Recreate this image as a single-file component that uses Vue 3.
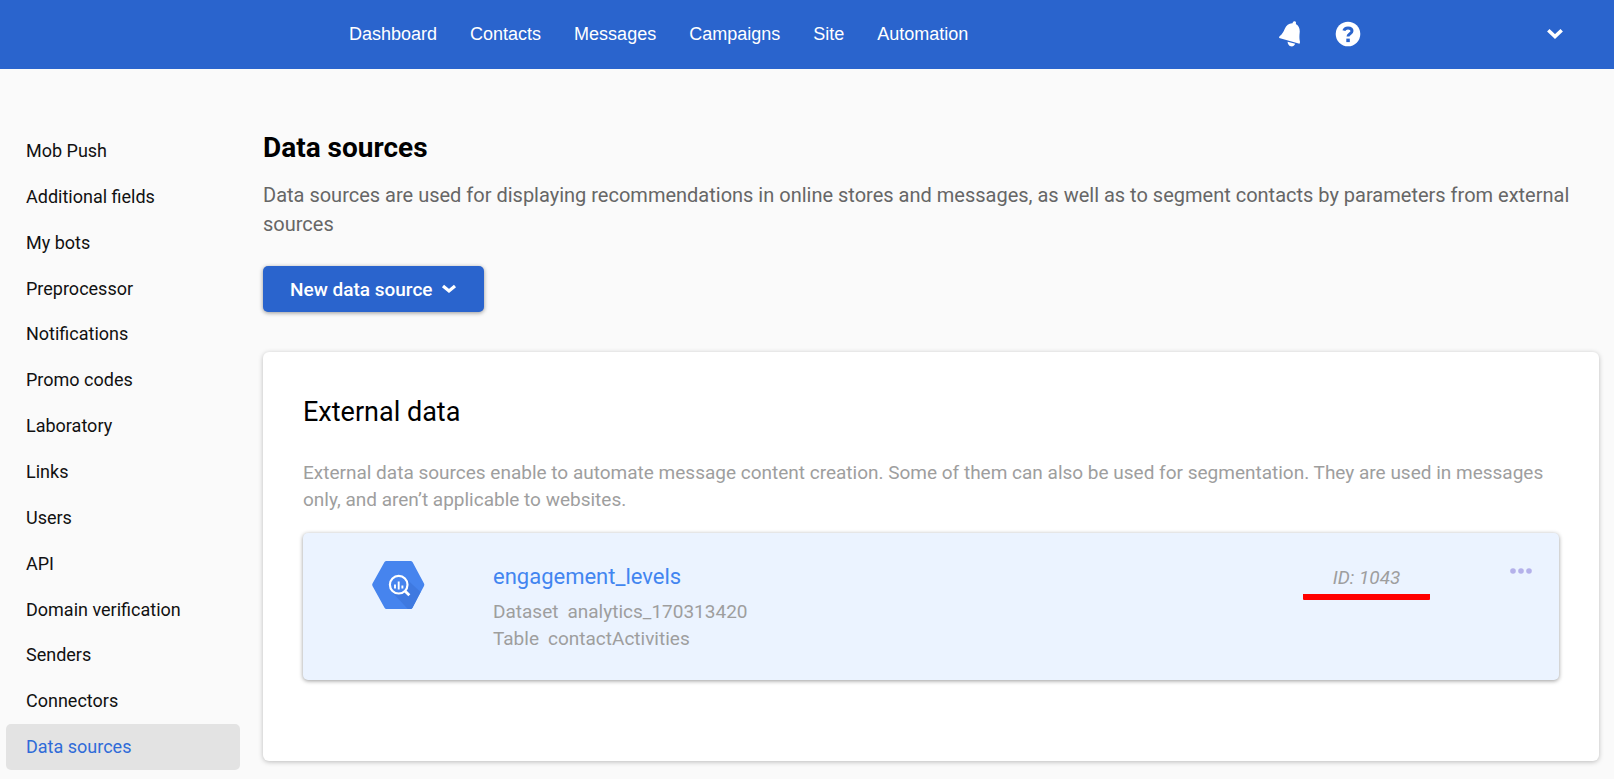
<script setup>
import { ref } from 'vue'

const navItems = ['Dashboard', 'Contacts', 'Messages', 'Campaigns', 'Site', 'Automation']

const settingsItems = [
  'Mob Push',
  'Additional fields',
  'My bots',
  'Preprocessor',
  'Notifications',
  'Promo codes',
  'Laboratory',
  'Links',
  'Users',
  'API',
  'Domain verification',
  'Senders',
  'Connectors',
  'Data sources',
]
const activeItem = ref('Data sources')

const sources = [
  {
    id: 1043,
    name: 'engagement_levels',
    details: [
      { label: 'Dataset', value: 'analytics_170313420' },
      { label: 'Table', value: 'contactActivities' },
    ],
  },
]
</script>

<template>
  <div class="page">
    <header class="topbar">
      <nav class="nav" aria-label="Main">
        <a v-for="item in navItems" :key="item" href="#" class="nav-link">{{ item }}</a>
      </nav>
      <div class="tools">
        <button type="button" class="icon-button" aria-label="Alerts">
          <svg width="22" height="26" viewBox="0 0 22 26" fill="#fff">
            <path d="M13.600 2.200C13.700.9 14.700 0 15.800.3c1.100.3 1.500 1.500 1 2.700 3 1.700 4.200 4.700 3.900 8.200-.3 3.400-.5 6.200.1 8.700.3 1 .3 1.900-.3 2.800L.2 17.100c-.3-1 .1-1.800.9-2.300 2.100-1.500 3.400-4 4.700-7 1.500-3.500 4.200-5.800 7.800-5.600z" />
            <path d="M8.600 20.800l7.600 2c-.8 1.900-2.600 3-4.500 2.500S8.600 22.900 8.600 20.800z" />
          </svg>
        </button>
        <button type="button" class="icon-button" aria-label="Help">
          <svg width="26" height="26" viewBox="0 0 26 26" fill="none">
            <circle cx="13" cy="13" r="12.300" fill="#fff" />
            <path d="M8.900 9.700C9.400 7.700 11 6.900 13 6.900c2.300 0 4 1.200 4 3.100 0 2.700-4 2.700-4 5.500" stroke="#2a64cd" stroke-width="3" />
            <rect x="11.300" y="17.600" width="3.500" height="3.500" fill="#2a64cd" />
          </svg>
        </button>
        <button type="button" class="icon-button account" aria-label="Account menu">
          <svg width="18" height="12" viewBox="0 0 18 12" fill="none">
            <path d="M2.300 2.300L9 8.500l6.700-6.200" stroke="#fff" stroke-width="3.600" />
          </svg>
        </button>
      </div>
    </header>

    <div class="body">
      <nav class="sidebar" aria-label="Settings">
        <a
          v-for="item in settingsItems"
          :key="item"
          href="#"
          class="side-link"
          :class="{ active: item === activeItem }"
          @click.prevent="activeItem = item"
        >{{ item }}</a>
      </nav>

      <main class="content">
        <h1 class="title">Data sources</h1>
        <p class="lead">
          Data sources are used for displaying recommendations in online stores and messages, as
          well as to segment contacts by parameters from external sources
        </p>
        <button type="button" class="primary">
          New data source
          <svg width="16" height="10" viewBox="0 0 16 10" fill="none" aria-hidden="true">
            <path d="M2 2l6 5 6-5" stroke="#fff" stroke-width="3.200" />
          </svg>
        </button>

        <section class="panel">
          <h2 class="panel-title">External data</h2>
          <p class="panel-text">
            External data sources enable to automate message content creation. Some of them can also
            be used for segmentation. They are used in messages only, and aren’t applicable to
            websites.
          </p>

          <article v-for="source in sources" :key="source.id" class="source">
            <svg class="source-icon" width="54" height="50" viewBox="0 0 54 50" fill="none" aria-hidden="true">
              <path d="M15.500 1h24q1.300 0 2 1.100L53 23.500q.7 1.300 0 2.600L41.500 47.700q-.7 1.300-2 1.300h-24q-1.300 0-2-1.300L1.500 26.100q-.7-1.300 0-2.600L13.500 2.100Q14.200 1 15.500 1z" fill="#4684ee" />
              <path d="M34.500 18L49.500 32 41.500 47.700q-.7 1.300-2 1.300h-2.700L21 32z" fill="#3f79e0" />
              <circle cx="27.700" cy="24.700" r="8.800" fill="#4684ee" stroke="#fff" stroke-width="2.200" />
              <path d="M34 31l4.300 4.300" stroke="#fff" stroke-width="2.800" />
              <path d="M24 24.500v4M27.700 21.500v8M31.400 25.500v3" stroke="#fff" stroke-width="1.900" />
            </svg>
            <div class="source-info">
              <a href="#" class="source-name">{{ source.name }}</a>
              <div v-for="detail in source.details" :key="detail.label" class="detail">
                <span>{{ detail.label }}</span>
                <span>{{ detail.value }}</span>
              </div>
            </div>
            <div class="source-id">ID: {{ source.id }}</div>
            <button type="button" class="more" aria-label="More actions">
              <svg width="22" height="6" viewBox="0 0 22 6" fill="#b4b1ea">
                <circle cx="3" cy="3" r="2.800" />
                <circle cx="11" cy="3" r="2.800" />
                <circle cx="19" cy="3" r="2.800" />
              </svg>
            </button>
          </article>
        </section>
      </main>
    </div>
  </div>
</template>

<style>
body {
  margin: 0;
  background: #fafafa;
}
</style>

<style scoped>
.page {
  min-height: 100vh;
  box-sizing: border-box;
  background: #fafafa;
  color: #000;
  font-family: Roboto, "Liberation Sans", sans-serif;
}

button {
  border: 0;
  padding: 0;
  background: none;
  font: inherit;
  cursor: pointer;
}

a {
  text-decoration: none;
}

svg {
  display: block;
}

.topbar {
  display: flex;
  align-items: center;
  justify-content: space-between;
  box-sizing: border-box;
  height: 69px;
  padding: 0 50px 2px 349px;
  background: #2a64cd;
}

.nav {
  display: flex;
  gap: 33px;
}

.nav-link {
  color: #fff;
  font-family: "Liberation Sans", Arial, sans-serif;
  font-size: 18px;
  line-height: 24px;
}

.tools {
  display: flex;
  align-items: center;
  gap: 34px;
}

.account {
  margin-left: 151px;
}

.body {
  display: grid;
  grid-template-columns: 240px minmax(0, 1fr);
  column-gap: 23px;
}

.sidebar {
  display: flex;
  flex-direction: column;
  padding: 59px 0 9px 6px;
}

.side-link {
  display: flex;
  flex: 1;
  align-items: center;
  padding: 0 20px;
  border-radius: 5px;
  color: #111;
  font-size: 18px;
  line-height: 24px;
}

.side-link.active {
  background: #e3e3e3;
  color: #2f6bd8;
}

.content {
  padding: 60px 15px 18px 0;
}

.title {
  margin: 0 0 14px;
  font-size: 28px;
  font-weight: 700;
  line-height: 38px;
}

.lead {
  margin: 0 0 27px;
  color: #666;
  font-size: 20px;
  line-height: 29px;
}

.primary {
  display: flex;
  align-items: center;
  gap: 9px;
  height: 46px;
  padding: 0 27px;
  border-radius: 5px;
  background: #2a64cd;
  box-shadow: 0 1px 4px rgba(0, 0, 0, 0.4);
  color: #fff;
  font-size: 19px;
  font-weight: 500;
}

.panel {
  margin-top: 40px;
  padding: 40px 40px 81px;
  border-radius: 6px;
  background: #fff;
  box-shadow: 0 1px 5px rgba(0, 0, 0, 0.25);
}

.panel-title {
  margin: 0 0 27px;
  font-size: 27px;
  font-weight: 400;
  line-height: 40px;
}

.panel-text {
  margin: 0 0 20px;
  color: #9e9e9e;
  font-size: 19px;
  line-height: 27px;
}

.source {
  display: grid;
  grid-template-columns: 54px minmax(0, 1fr) 127px 102px;
  align-items: start;
  padding: 27px 27px 28px 68px;
  border-radius: 5px;
  background: #ebf3ff;
  box-shadow: 0 1px 4px rgba(0, 0, 0, 0.4);
}

.source-info {
  display: flex;
  flex-direction: column;
  align-items: flex-start;
  padding-left: 68px;
}

.source-name {
  margin-bottom: 5px;
  color: #4285f0;
  font-size: 22px;
  line-height: 33px;
}

.detail {
  display: flex;
  gap: 9px;
  color: #9e9e9e;
  font-size: 19px;
  line-height: 27px;
}

.source-id {
  padding-top: 2px;
  border-bottom: 6px solid #f00;
  border-radius: 1px;
  color: #9e9e9e;
  font-size: 19px;
  font-style: italic;
  line-height: 32px;
  text-align: center;
}

.more {
  justify-self: end;
  padding: 8px 0;
}
</style>
